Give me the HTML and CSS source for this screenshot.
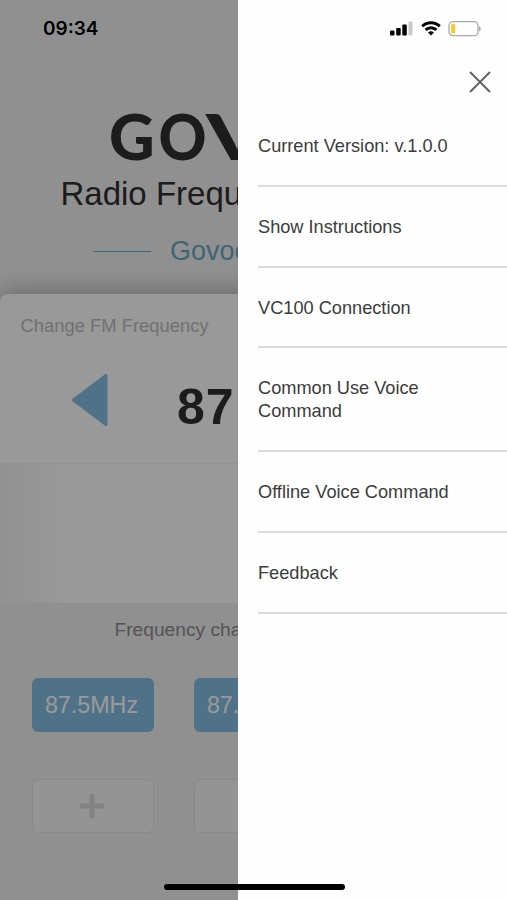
FILE: index.html
```
<!DOCTYPE html>
<html lang="en">
<head>
    <meta charset="UTF-8">
    <meta name="viewport" content="width=device-width, initial-scale=1.0">
    <title>Govoce Radio Frequency</title>
    <link rel="stylesheet" href="styles.css">
</head>
<body>
    <div class="page">
        <header class="header">
            <div class="logo">G<span class="logo-o">O</span><span class="logo-v">V</span></div>
            <h1>Radio Frequency</h1>
            <div class="subtitle"><span class="line"></span>Govoce</div>
        </header>

        <section class="card">
            <h2>Change FM Frequency</h2>
            <div class="tuner">
                <svg class="arrow" width="38" height="54" viewBox="0 0 38 54">
                    <path d="M35 2.500V51.500L2.500 27Z" fill="#84bfe3" stroke="#84bfe3" stroke-width="3" stroke-linejoin="round"/>
                </svg>
                <strong>87</strong>
            </div>
            <div class="dial"></div>
        </section>

        <section class="channels">
            <h3>Frequency channel</h3>
            <div class="grid">
                <button class="channel">87.5MHz</button>
                <button class="channel">87.5MHz</button>
                <button class="channel empty">
                    <svg width="26" height="26" viewBox="0 0 26 26"><path d="M13 3v20M3 13h20" stroke="#d9d9d9" stroke-width="5" stroke-linecap="round"/></svg>
                </button>
                <button class="channel empty"></button>
            </div>
        </section>
    </div>

    <div class="overlay"></div>

    <!-- Side menu -->
    <nav class="menu">
        <button class="close" aria-label="Close">
            <svg width="22" height="22" viewBox="0 0 22 22"><path d="M1 1L21 21M21 1L1 21" stroke="#646464" stroke-width="2"/></svg>
        </button>
        <ul>
            <li>Current Version: v.1.0.0</li>
            <li>Show Instructions</li>
            <li>VC100 Connection</li>
            <li>Common Use Voice Command</li>
            <li>Offline Voice Command</li>
            <li>Feedback</li>
        </ul>
    </nav>

    <div class="status-bar">
        <span class="time">09:34</span>
        <div class="status-icons">
            <svg width="24" height="16" viewBox="0 0 24 16">
                <rect x="1" y="9.500" width="4.500" height="5" rx="1"/>
                <rect x="7.200" y="7" width="4.500" height="7.500" rx="1"/>
                <rect x="13.300" y="3.500" width="4.500" height="11" rx="1"/>
                <rect x="19.500" y="0.500" width="4" height="14" rx="1" fill="#c9c9c9"/>
            </svg>
            <svg class="wifi" width="20" height="15" viewBox="0 0 20 15" fill="none" stroke="#000" stroke-width="2.900">
                <path d="M1.200 5.300A12.500 12.500 0 0 1 18.800 5.300"/>
                <path d="M4.600 8.900A7.700 7.700 0 0 1 15.400 8.900"/>
                <path d="M10 14.500L7 11.500A4.500 4.500 0 0 1 13 11.500Z" fill="#000" stroke="none"/>
            </svg>
            <svg width="34" height="16" viewBox="0 0 34 16">
                <rect x="1" y="0.700" width="29" height="14" rx="4" fill="none" stroke="#a9a9a9" stroke-width="1.300"/>
                <rect x="3.200" y="3" width="4" height="9.500" rx="1.300" fill="#f6c92f"/>
                <path d="M31 5Q34.500 7.700 31 10.500Z" fill="#a9a9a9"/>
            </svg>
        </div>
    </div>
    <div class="home-indicator"></div>
</body>
</html>
```
FILE: styles.css
```
* {
    box-sizing: border-box;
}

body {
    margin: 0;
    height: 900px;
    position: relative;
    overflow: hidden;
    font-family: "Liberation Sans", Arial, sans-serif;
    color: #2f2f2f;
}

.page {
    height: 900px;
    background: #f0f0f0;
    overflow: hidden;
}

h1, h2, h3 {
    margin: 0;
    font-weight: normal;
    white-space: nowrap;
}

.header {
    height: 294px;
    padding-top: 104px;
}

.logo {
    height: 64px;
    padding-left: 109px;
    font-family: Lato, sans-serif;
    font-size: 63px;
    font-weight: 900;
    line-height: 64px;
}

.logo-o {
    display: inline-block;
    margin-left: 2px;
    transform: scaleX(0.94);
}

/* wide V, its left stroke leans out from the O */
.logo-v {
    display: inline-block;
    margin-left: -2px;
    transform: scaleX(1.4);
    transform-origin: left;
}

h1 {
    margin-top: 7px;
    padding-left: 60.500px;
    font-size: 33px;
    line-height: 38px;
}

.subtitle {
    display: flex;
    align-items: center;
    margin-top: 22px;
    padding-left: 93px;
    font-size: 27px;
    line-height: 32px;
    color: #6aa9c2;
}

.line {
    width: 58px;
    height: 1px;
    margin-right: 19px;
    background: #62abc8;
}

.card {
    height: 309px;
    padding-top: 22px;
    background: #fff;
    border-radius: 8px 8px 0 0;
    box-shadow: 0 -3px 24px rgba(0, 0, 0, 0.28);
}

h2 {
    padding-left: 20.500px;
    font-size: 18.400px;
    line-height: 20px;
    color: #bcbcbc;
}

.tuner {
    display: flex;
    align-items: center;
    height: 127px;
    padding-left: 71px;
}

.tuner strong {
    margin: 14px 0 0 68px;
    font-size: 50px;
    line-height: 54px;
    letter-spacing: 1px;
}

.dial {
    height: 140px;
    border-top: 1px solid #f4f4f4;
    background: linear-gradient(to right, #f3f3f3, #fff 70px);
}

.channels {
    position: relative;
    height: 297px;
    padding-top: 15px;
    background: #f0f0f0;
}

h3 {
    padding-left: 114.500px;
    font-size: 19.200px;
    line-height: 24px;
    color: #8d8d8d;
}

.grid {
    display: grid;
    grid-template-columns: 122px 122px 122px;
    gap: 47px 40px;
    padding: 36px 0 0 31.500px;
}

.channel {
    display: flex;
    align-items: center;
    justify-content: center;
    height: 54px;
    padding: 0 2px 0 0;
    border: none;
    border-radius: 6px;
    background: #84bfe3;
    color: #fff;
    font-family: inherit;
    font-size: 23.300px;
}

.channel:nth-child(3) {
    grid-column: 1;
}

.empty {
    border: 1px solid #e5e5e5;
    background: #f7f7f7;
}

.overlay {
    position: absolute;
    inset: 0;
    background: rgba(0, 0, 0, 0.4);
}

.menu {
    position: absolute;
    top: 0;
    right: 0;
    bottom: 0;
    width: 269px;
    padding-top: 71px;
    background: #fefefe;
}

.close {
    display: block;
    margin: 0 16px 0 auto;
    padding: 0;
    border: none;
    background: none;
    height: 22px;
}

.close svg {
    display: block;
}

.menu ul {
    margin: 13px 0 0 20px;
    padding: 0;
    list-style: none;
}

.menu li {
    padding: 29px 50px 26.750px 0;
    border-bottom: 2px solid #dcdcdc;
    font-size: 18.200px;
    line-height: 23px;
    color: #3c3c3c;
}

.status-bar {
    position: absolute;
    top: 18px;
    left: 43px;
    right: 25px;
    display: flex;
    justify-content: space-between;
    align-items: center;
    height: 21px;
    color: #000;
}

.time {
    font-family: Inter, sans-serif;
    font-size: 19px;
    font-weight: 600;
}

.status-icons {
    display: flex;
    align-items: center;
}

.wifi {
    margin: 0 7px 0 8px;
}

.home-indicator {
    position: absolute;
    left: 163.500px;
    bottom: 10px;
    width: 181px;
    height: 6px;
    border-radius: 3px;
    background: #000;
}
```
